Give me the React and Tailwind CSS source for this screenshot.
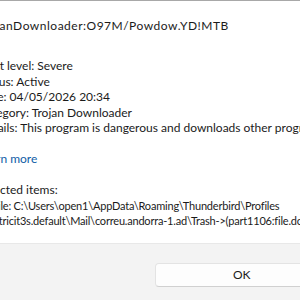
import React from "react";

const details = [
  { label: "Alert level:", value: "Severe" },
  { label: "Status:", value: "Active" },
  { label: "Date:", value: "04/05/2026 20:34" },
  { label: "Category:", value: "Trojan Downloader" },
  { label: "Details:", value: "This program is dangerous and downloads other programs." },
];

const App = () => {
  return (
    <div
      className="w-[300px] h-[300px] overflow-hidden flex flex-col bg-white border-t border-[#a8a8a8] text-[12px] leading-[15.5px] text-[#1b1b1b]"
      style={{ fontFamily: '"Segoe UI", Lato, "Noto Sans", sans-serif' }}
    >
      {/* Content */}
      <div className="flex flex-col -ml-[22px] pt-[17px] h-[242px] whitespace-nowrap">
        <p className="tracking-[0.5px]">TrojanDownloader:O97M/Powdow.YD!MTB</p>

        <div className="flex flex-col mt-[24.5px]">
          {details.map((d) => (
            <p key={d.label}>
              {d.label} {d.value}
            </p>
          ))}
          <p className="mt-[15.5px] text-[#0f5ca6]">Learn more</p>
          <p className="mt-[15.5px]">Affected items:</p>
          <div className="flex flex-col ml-[14px] text-[11px] tracking-[-0.2px]">
            <p>File: C:\Users\open1\AppData\Roaming\Thunderbird\Profiles</p>
            <p className="-ml-[4px]">ectricit3s.default\Mail\correu.andorra-1.ad\Trash-&gt;(part1106:file.docm)</p>
          </div>
        </div>
      </div>

      {/* Footer */}
      <div className="flex-1 bg-[#f3f3f3] border-t border-[#e8e8e8] flex items-start pt-[19px] pl-[155px]">
        <button className="w-[180px] h-[24px] shrink-0 rounded-[4px] bg-[#fdfdfd] border border-[#e3e3e3] border-b-[#d0d0d0] text-left pl-[77px] text-[12px] text-[#1b1b1b]">
          OK
        </button>
      </div>
    </div>
  );
};

export default App;
